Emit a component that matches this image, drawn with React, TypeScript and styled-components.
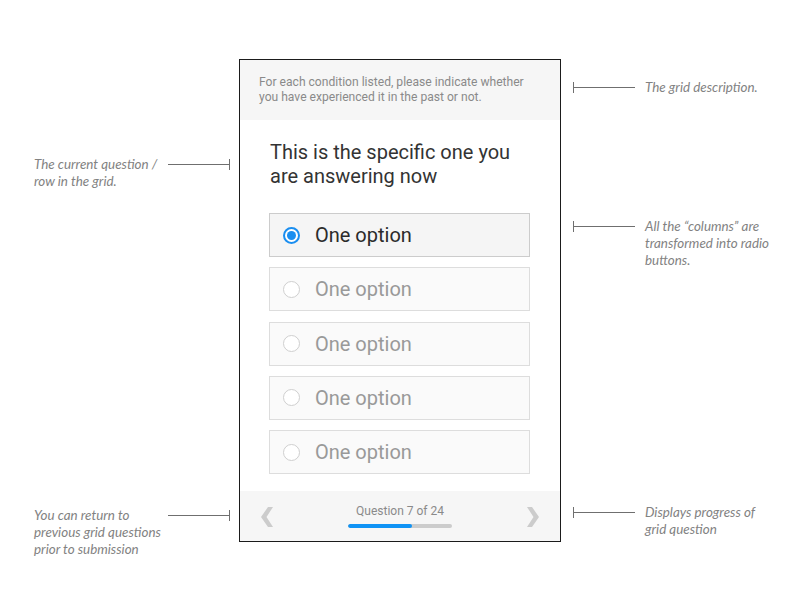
import React from "react";
import styled, { createGlobalStyle } from "styled-components";

const GlobalStyle = createGlobalStyle`
  html, body {
    margin: 0;
    padding: 0;
    background: #ffffff;
  }
`;

const Stage = styled.div`
  width: 800px;
  height: 600px;
  display: grid;
  grid-template-columns: 239px 322px 239px;
  padding-top: 59px;
  box-sizing: border-box;
`;

const Side = styled.aside<{ $right?: boolean }>`
  display: flex;
  flex-direction: column;
  align-items: ${(p) => (p.$right ? "flex-start" : "flex-end")};
`;

const Callout = styled.div<{ $right?: boolean; $top: number }>`
  display: flex;
  flex-direction: ${(p) => (p.$right ? "row-reverse" : "row")};
  align-items: flex-start;
  margin-top: ${(p) => p.$top}px;
  ${(p) => (p.$right ? "padding-left: 12px;" : "padding-right: 9px;")}
`;

const Note = styled.p<{ $right?: boolean }>`
  margin: 0;
  width: ${(p) => (p.$right ? "140px" : "134px")};
  ${(p) => (p.$right ? "margin-left: 10px;" : "")}
  font-family: Lato, "Liberation Sans", sans-serif;
  font-style: italic;
  font-size: 13.4px;
  line-height: 17px;
  color: #828282;
`;

const Leader = styled.div<{ $right?: boolean }>`
  display: flex;
  flex-direction: ${(p) => (p.$right ? "row-reverse" : "row")};
  align-items: center;
  height: 11px;
  margin-top: 3px;
`;

const LeaderLine = styled.span`
  width: 61px;
  height: 1px;
  background: #6f6f6f;
`;

const LeaderTick = styled.span`
  width: 1px;
  height: 11px;
  background: #6f6f6f;
`;

const Phone = styled.section`
  border: 1px solid #1b1b1b;
  height: 483px;
  box-sizing: border-box;
  display: flex;
  flex-direction: column;
  font-family: Roboto, "Liberation Sans", sans-serif;
  background: #ffffff;
`;

const Description = styled.header`
  background: #f6f6f6;
  height: 60px;
  box-sizing: border-box;
  padding: 15px 20px 0 19px;
  font-size: 12.1px;
  line-height: 15px;
  color: #8a8a8a;
`;

const Body = styled.main`
  flex: 1;
  padding: 20px 30px 0 29px;
  display: flex;
  flex-direction: column;
`;

const Question = styled.h2`
  margin: 0 0 25px 1px;
  font-weight: 400;
  font-size: 20px;
  line-height: 24px;
  color: #333333;
`;

const Options = styled.div`
  display: flex;
  flex-direction: column;
  gap: 10.25px;
`;

const Option = styled.label<{ $checked?: boolean }>`
  display: flex;
  align-items: center;
  height: 44px;
  box-sizing: border-box;
  padding-left: 13px;
  border: 1px solid ${(p) => (p.$checked ? "#cccccc" : "#dddddd")};
  background: ${(p) => (p.$checked ? "#f5f5f5" : "#fafafa")};
  font-size: 20px;
  color: ${(p) => (p.$checked ? "#2b2b2b" : "#999999")};
`;

const Radio = styled.span<{ $checked?: boolean }>`
  width: 17px;
  height: 17px;
  box-sizing: border-box;
  border-radius: 50%;
  margin-right: 15px;
  background: #ffffff;
  border: ${(p) => (p.$checked ? "2px solid #1a8ef0" : "1px solid #cfcfcf")};
  display: flex;
  align-items: center;
  justify-content: center;

  &::after {
    content: "";
    display: ${(p) => (p.$checked ? "block" : "none")};
    width: 9px;
    height: 9px;
    border-radius: 50%;
    background: #1a8ef0;
  }
`;

const Footer = styled.footer`
  height: 50px;
  background: #f6f6f6;
  display: flex;
  align-items: center;
  justify-content: space-between;
  padding: 0 20px 0 20px;
`;

const Nav = styled.span`
  display: flex;
  width: 14px;
  height: 22px;
  margin-top: 2px;
`;

const Progress = styled.div`
  display: flex;
  flex-direction: column;
  align-items: center;
  gap: 6px;
  margin-top: 0px;
`;

const ProgressLabel = styled.span`
  font-size: 12px;
  line-height: 14px;
  color: #8a8a8a;
`;

const Track = styled.div`
  width: 104px;
  height: 4px;
  border-radius: 2px;
  background: #cccccc;
  overflow: hidden;
`;

const Fill = styled.div`
  height: 100%;
  background: #0f93f5;
  border-radius: 2px;
`;

const Chevron = ({ dir }: { dir: "left" | "right" }) => (
  <svg width="14" height="22" viewBox="0 0 14 22">
    <path
      d={
        dir === "left"
          ? "M8 1 L13 1 L6.5 11 L13 21 L8 21 L1 11 Z"
          : "M6 1 L1 1 L7.5 11 L1 21 L6 21 L13 11 Z"
      }
      fill="#cccccc"
    />
  </svg>
);

const leftNotes = [
  { top: 97, text: ["The current question /", "row in the grid."] },
  {
    top: 317,
    text: ["You can return to", "previous grid questions", "prior to submission"],
  },
];

const rightNotes = [
  { top: 20, text: ["The grid description."] },
  {
    top: 122,
    text: ["All the \u201ccolumns\u201d are", "transformed into radio", "buttons."],
  },
  { top: 235, text: ["Displays progress of", "grid question"] },
];

const Lines = ({ lines }: { lines: string[] }) => (
  <>
    {lines.map((t, j) => (
      <React.Fragment key={j}>
        {t}
        {j < lines.length - 1 && <br />}
      </React.Fragment>
    ))}
  </>
);

const App = () => {
  const options = [true, false, false, false, false];

  return (
    <>
      <GlobalStyle />
      <Stage>
        <Side>
          {leftNotes.map((n, i) => (
            <Callout key={i} $top={n.top}>
              <Note>
                <Lines lines={n.text} />
              </Note>
              <Leader>
                <LeaderLine />
                <LeaderTick />
              </Leader>
            </Callout>
          ))}
        </Side>

        <Phone>
          <Description>
            For each condition listed, please indicate whether you have
            experienced it in the past or not.
          </Description>
          <Body>
            <Question>
              This is the specific one you
              <br />
              are answering now
            </Question>
            <Options>
              {options.map((checked, i) => (
                <Option key={i} $checked={checked}>
                  <Radio $checked={checked} />
                  One option
                </Option>
              ))}
            </Options>
          </Body>
          <Footer>
            <Nav>
              <Chevron dir="left" />
            </Nav>
            <Progress>
              <ProgressLabel>Question 7 of 24</ProgressLabel>
              <Track>
                <Fill style={{ width: `${(64 / 104) * 100}%` }} />
              </Track>
            </Progress>
            <Nav>
              <Chevron dir="right" />
            </Nav>
          </Footer>
        </Phone>

        <Side $right>
          {rightNotes.map((n, i) => (
            <Callout key={i} $right $top={n.top}>
              <Note $right>
                <Lines lines={n.text} />
              </Note>
              <Leader $right>
                <LeaderLine />
                <LeaderTick />
              </Leader>
            </Callout>
          ))}
        </Side>
      </Stage>
    </>
  );
};

export default App;
